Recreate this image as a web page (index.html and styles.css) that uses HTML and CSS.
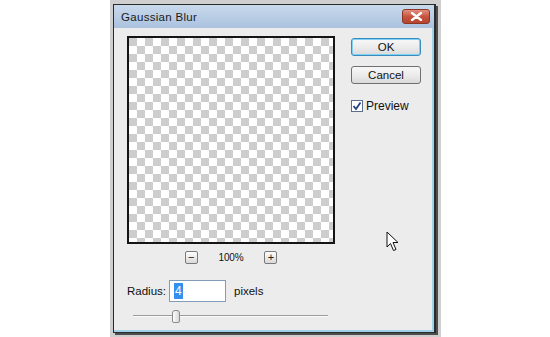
FILE: index.html
```html
<!DOCTYPE html>
<html lang="en">
<head>
    <meta charset="UTF-8">
    <title>Gaussian Blur</title>
    <link rel="stylesheet" href="styles.css">
</head>
<body>
    <div class="desk">
        <div class="dialog">
            <!-- Barra de titulo -->
            <div class="titlebar">
                <span class="title">Gaussian Blur</span>
                <span class="close">
                    <svg width="13" height="9" viewBox="0 0 13 9">
                        <path d="M2 1 L11 8 M11 1 L2 8" stroke="#fff" stroke-width="2.4" stroke-linecap="round"/>
                    </svg>
                </span>
            </div>

            <div class="body">
                <div class="main">
                    <div class="left">
                        <div class="preview"></div>
                        <div class="zoom">
                            <span class="zbtn">&minus;</span>
                            <span class="zval">100%</span>
                            <span class="zbtn">+</span>
                        </div>
                        <div class="radius">
                            <span class="lbl">Radius:</span>
                            <span class="field"><span class="sel">4</span></span>
                            <span class="unit">pixels</span>
                        </div>
                        <div class="slider">
                            <span class="thumb"></span>
                        </div>
                    </div>

                    <div class="right">
                        <div class="btn ok">OK</div>
                        <div class="btn">Cancel</div>
                        <label class="check">
                            <svg width="12" height="12" viewBox="0 0 12 12">
                                <rect x="0.5" y="0.5" width="11" height="11" fill="#fff" stroke="#5a6f8c"/>
                                <path d="M2.5 6 L5 9 L9.5 2.5" stroke="#22408a" stroke-width="1.8" fill="none"/>
                            </svg>
                            Preview
                        </label>
                    </div>
                </div>

                <!-- Cursor del raton -->
                <svg class="cursor" width="14" height="21" viewBox="0 0 14 21">
                    <path d="M1 1 L1 16 L4.5 12.5 L7.5 19.5 L10 18.5 L7 11.5 L12 11.5 Z" fill="#fff" stroke="#111" stroke-width="1" stroke-linejoin="round"/>
                </svg>
            </div>
        </div>
    </div>
</body>
</html>
```

FILE: styles.css
```css
body {
    margin: 0;
    width: 550px;
    height: 337px;
    overflow: hidden;
    background-color: #ffffff;
    font-family: 'Liberation Sans', Arial, sans-serif;
    font-size: 11px;
    color: #111;
}

.desk {
    margin-left: 110px;
    width: 331px;
    height: 337px;
    padding: 4px 0 0 3px;
    box-sizing: border-box;
    background-color: #cfcfcf;
}

.dialog {
    width: 323px;
    height: 329px;
    box-sizing: border-box;
    border: 1px solid #2b2b2b;
    border-right-width: 2px;
    box-shadow: 2px 2px 0 #4d4d4d;
    display: flex;
    flex-direction: column;
    background: #ececec;
}

.titlebar {
    height: 23px;
    display: flex;
    align-items: center;
    justify-content: space-between;
    padding: 0 4px 0 7px;
    background: linear-gradient(#c9d9ec, #aac2de);
}

.title {
    font-size: 11.5px;
    color: #1a1a1a;
    letter-spacing: 0.3px;
}

.close {
    width: 26px;
    height: 13px;
    border: 1px solid #8a3526;
    border-radius: 3px;
    background: linear-gradient(#e3907f, #c4503a 55%, #b8452f);
    display: flex;
    align-items: center;
    justify-content: center;
}

.body {
    flex: 1;
    position: relative;
    border-right: 2px solid #9fd2e8;
    border-bottom: 2px solid #9fd2e8;
    padding: 8px 0 0 13px;
}

.main {
    display: flex;
}

.left {
    width: 208px;
    display: flex;
    flex-direction: column;
}

.preview {
    width: 208px;
    height: 208px;
    box-sizing: border-box;
    border: 2px solid #151515;
    background: conic-gradient(#fff 0 25%, #cdcdcd 0 50%, #fff 0 75%, #cdcdcd 0) 0 0 / 16px 16px;
}

.zoom {
    margin-top: 7px;
    display: flex;
    justify-content: center;
    align-items: center;
    gap: 21px;
    height: 13px;
}

.zbtn {
    width: 11px;
    height: 11px;
    border: 1px solid #7a7a7a;
    border-radius: 2px;
    background: linear-gradient(#fdfdfd, #d9d9d9);
    font-size: 11px;
    line-height: 10px;
    text-align: center;
    color: #222;
}

.zval {
    font-size: 10px;
    letter-spacing: -0.2px;
}

.radius {
    margin-top: 16px;
    display: flex;
    align-items: center;
    height: 22px;
}

.lbl {
    font-size: 11.5px;
    width: 42px;
}

.field {
    width: 51px;
    height: 20px;
    border: 1px solid #7f9db9;
    background: #fff;
    display: flex;
    align-items: center;
    padding-left: 4px;
    box-sizing: content-box;
}

.sel {
    background: #3390ef;
    color: #fff;
    font-size: 12px;
    padding: 1px 1px;
    line-height: 14px;
}

.unit {
    margin-left: 8px;
    font-size: 11.5px;
}

.slider {
    margin: 8px 0 0 6px;
    width: 195px;
    height: 12px;
    position: relative;
    background: linear-gradient(transparent 5px, #9c9c9c 5px, #9c9c9c 6px, #fafafa 6px, #fafafa 7px, transparent 7px);
}

.thumb {
    position: absolute;
    left: 39px;
    top: 0;
    width: 6px;
    height: 11px;
    border: 1px solid #8a8a8a;
    border-radius: 3px 3px 2px 2px;
    background: linear-gradient(90deg, #fdfdfd, #d8d8d8);
}

.right {
    margin-left: 16px;
    display: flex;
    flex-direction: column;
}

.btn {
    width: 68px;
    height: 16px;
    margin-top: 2px;
    border: 1px solid #707070;
    border-radius: 3px;
    background: linear-gradient(#f7f7f7, #ececec 50%, #dadada);
    font-size: 11.5px;
    display: flex;
    align-items: center;
    justify-content: center;
}

.btn.ok {
    border: 1px solid #3a8cbc;
    box-shadow: inset 0 0 0 1px #7fd0f2;
}

.btn + .btn {
    margin-top: 10px;
}

.check {
    margin-top: 15px;
    display: flex;
    align-items: center;
    gap: 3px;
    font-size: 12px;
}

.cursor {
    position: absolute;
    left: 272px;
    top: 203px;
}
```
